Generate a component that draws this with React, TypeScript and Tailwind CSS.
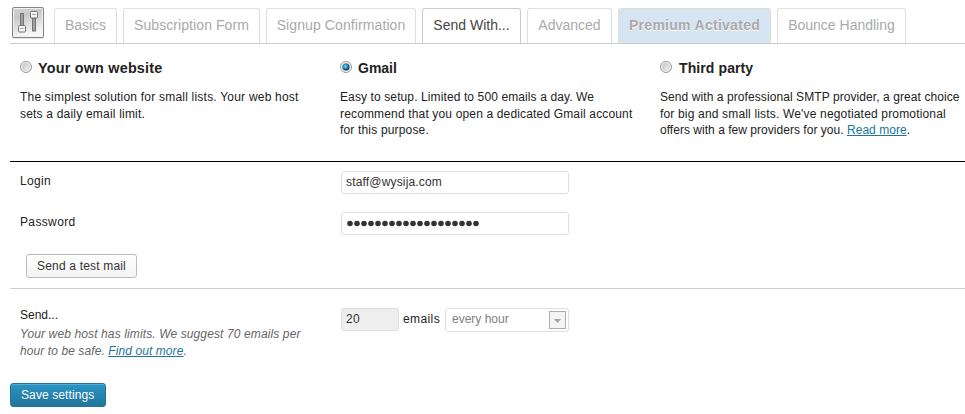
import React from "react";

const tabs = [
  { label: "Basics", box: "w-[63px] border-[#dfdfdf] text-[#aaa]" },
  { label: "Subscription Form", box: "w-[137px] border-[#dfdfdf] text-[#aaa] tracking-[0.08px]" },
  { label: "Signup Confirmation", box: "w-[150px] border-[#dfdfdf] text-[#aaa] tracking-[0.1px]" },
  { label: "Send With...", box: "w-[99px] border-[#ccc] text-[#464646] h-9 bg-white" },
  { label: "Advanced", box: "w-[85px] border-[#dfdfdf] text-[#aaa]" },
  {
    label: "Premium Activated",
    box: "w-[153px] border-[#dfdfdf] bg-[#d7e4f1] font-bold text-[#aaa] tracking-[0.28px] [text-shadow:0_1px_0_#fff]",
  },
  { label: "Bounce Handling", box: "w-[129px] border-[#dfdfdf] text-[#aaa]" },
];

function SlidersIcon() {
  return (
    <svg width="34" height="32" viewBox="0 0 34 32" className="block shrink-0">
      <defs>
        <linearGradient id="plate" x1="0" y1="0" x2="0.3" y2="1">
          <stop offset="0" stopColor="#d6d6d6" />
          <stop offset="0.35" stopColor="#c9c9c9" />
          <stop offset="1" stopColor="#f8f8f8" />
        </linearGradient>
      </defs>
      <rect x="1" y="1.5" width="32" height="30" rx="2" fill="#ccc" />
      <rect x="1.5" y="0.5" width="31" height="30" rx="1.5" fill="url(#plate)" stroke="#858585" />
      <rect x="2.5" y="1.5" width="29" height="28" rx="1" fill="none" stroke="#f0f0f0" />
      <rect x="9.5" y="6.5" width="3" height="13" fill="#a0a0a0" stroke="#747474" />
      <rect x="21.5" y="11.5" width="3" height="12.5" fill="#a0a0a0" stroke="#747474" />
      <rect x="7.5" y="18.5" width="7" height="6.5" rx="1" fill="#f4f4f4" stroke="#747474" />
      <rect x="19.5" y="4.5" width="7" height="6.5" rx="1" fill="#f4f4f4" stroke="#747474" />
      <path d="M9 21.5h4M21 7.5h4" stroke="#aaa" />
    </svg>
  );
}

function Radio({ id, checked }: { id: string; checked?: boolean }) {
  return (
    <svg width="12" height="12" viewBox="0 0 12 12" className="block shrink-0">
      <defs>
        <linearGradient id={id} x1="0" y1="0" x2="1" y2="1">
          <stop offset="0" stopColor="#bfc3c8" />
          <stop offset="1" stopColor="#f6f6f6" />
        </linearGradient>
        <radialGradient id={id + "-dot"} cx="0.42" cy="0.4" r="0.6">
          <stop offset="0" stopColor="#8be4fb" />
          <stop offset="0.5" stopColor="#2388bd" />
          <stop offset="1" stopColor="#123657" />
        </radialGradient>
      </defs>
      <circle cx="6" cy="6" r="5.5" fill="#f6f6f6" stroke="#989999" />
      <circle cx="6" cy="6" r="3.8" fill={`url(#${id})`} stroke="#c5c9cd" strokeWidth="0.6" />
      {checked && <circle cx="6" cy="6" r="3.5" fill={`url(#${id}-dot)`} />}
    </svg>
  );
}

function Option({ id, title, checked, children }: { id: string; title: React.ReactNode; checked?: boolean; children: React.ReactNode }) {
  return (
    <section className="w-80 shrink-0 pl-2.5">
      <div className="flex h-5">
        <div className="pt-[3px]"><Radio id={id} checked={checked} /></div>
        <h3 className="pl-1.5 text-[14px] leading-5 font-bold text-[#222]">{title}</h3>
      </div>
      <p className="mt-[11px] text-[12px] leading-[16.5px] whitespace-nowrap">{children}</p>
    </section>
  );
}

export default function App() {
  return (
    <main className="h-[414px] w-[965px] overflow-hidden bg-white pl-2.5 font-['Liberation_Sans',Arial,sans-serif] text-[12px] text-[#222]">
      <nav className="flex h-11 items-start border-b border-[#ccc] pt-2 text-[14px]">
        <div className="-mt-[1px] mr-2.5 ml-[1px] w-[33px]"><SlidersIcon /></div>
        <div className="flex gap-1.5">
          {tabs.map((t) => (
            <div key={t.label} className={"flex h-[35px] shrink-0 justify-center rounded-t-[3px] border border-b-0 pt-1 leading-6 whitespace-nowrap " + t.box}>
              {t.label}
            </div>
          ))}
        </div>
      </nav>

      <div className="flex h-[118px] border-b border-black pt-[14px]">
        <Option id="own" title={<span className="text-[14.4px] tracking-[0.2px]">Your own website</span>}>
          <span className="block tracking-[0.215px]">The simplest solution for small lists. Your web host</span>
          <span className="block tracking-[0.2px]">sets a daily email limit.</span>
        </Option>
        <Option id="gmail" title="Gmail" checked>
          <span className="block tracking-[0.11px]">Easy to setup. Limited to 500 emails a day. We</span>
          <span className="block tracking-[0.155px]">recommend that you open a dedicated Gmail account</span>
          <span className="block tracking-[0.17px]">for this purpose.</span>
        </Option>
        <Option id="third" title={<span className="ml-[1px] tracking-[0.1px]">Third party</span>}>
          <span className="block tracking-[0.08px]">Send with a professional SMTP provider, a great choice</span>
          <span className="block tracking-[0.17px]">for big and small lists. We've negotiated promotional</span>
          <span className="block tracking-[0.03px]">offers with a few providers for you. <a className="text-[#21759b] underline">Read more</a>.</span>
        </Option>
      </div>

      <div className="h-[127px] border-b border-[#ccc] pt-[9px] pl-2.5">
        <div className="flex h-[41px]">
          <div className="w-[321px] pt-[2px] leading-[17px] tracking-[0.3px]">Login</div>
          <div className="h-[23px] w-[228px] rounded-[3px] border border-[#dfdfdf] pl-[4px] leading-[21px] tracking-[0.17px] text-[#333]">staff@wysija.com</div>
        </div>
        <div className="flex h-[42px]">
          <div className="w-[321px] pt-[2px] leading-[17px] tracking-[0.36px]">Password</div>
          <div className="flex h-[23px] w-[228px] items-center rounded-[3px] border border-[#dfdfdf] pl-[4px]">
            {Array.from({ length: 19 }, (_, i) => (
              <svg key={i} width="7" height="7" viewBox="0 0 7 7" className="block shrink-0">
                <circle cx="4" cy="3.5" r="2.8" fill="#333" />
              </svg>
            ))}
          </div>
        </div>
        <div className="ml-1.5 h-6 w-[111px] rounded-[3px] border border-[#bbb] bg-linear-to-b from-[#fefefe] to-[#f4f4f4] text-center leading-[22px] tracking-[0.18px] text-[#333]">Send a test mail</div>
      </div>

      <div className="flex h-[94px] pt-[18px] pl-2.5">
        <div className="w-[321px] whitespace-nowrap">
          <div className="leading-[17px]">Send...</div>
          <p className="pt-[2px] leading-[17px] text-[#666] italic">
            <span className="block tracking-[0.12px]">Your web host has limits. We suggest 70 emails per</span>
            <span className="block tracking-[0.09px]">hour to be safe. <a className="text-[#21759b] underline">Find out more</a>.</span>
          </p>
        </div>
        <div className="flex pt-[1px]">
          <div className="h-[23px] w-[58px] rounded-[3px] border border-[#dfdfdf] bg-[#eee] pl-[4px] leading-[21px] tracking-[0.3px] text-[#333]">20</div>
          <div className="w-[46px] pl-[4px] leading-[23px] tracking-[0.4px]">emails</div>
          <div className="flex h-6 w-[124px] justify-between rounded-[3px] border border-[#dfdfdf] pt-[2px] pr-[2px] pl-1.5 text-[#808080]">
            <span className="leading-[17px]">every hour</span>
            <span className="flex h-[18px] w-[17px] items-center justify-center border border-[#abadb3] bg-[#f4f4f4]">
              <svg width="7" height="4" viewBox="0 0 7 4" className="mt-[2px]"><path d="M0 0h7L3.5 4z" fill="#a0a4a6" /></svg>
            </span>
          </div>
        </div>
      </div>

      <div className="h-6 w-24 rounded-[3px] border border-[#21759b] bg-linear-to-b from-[#2a95c5] to-[#21759b] pl-[10px] leading-[22px] tracking-[0.1px] text-white [box-shadow:inset_0_1px_0_rgba(120,200,230,0.5)] [text-shadow:0_1px_0_rgba(0,0,0,0.1)]">Save settings</div>
    </main>
  );
}
